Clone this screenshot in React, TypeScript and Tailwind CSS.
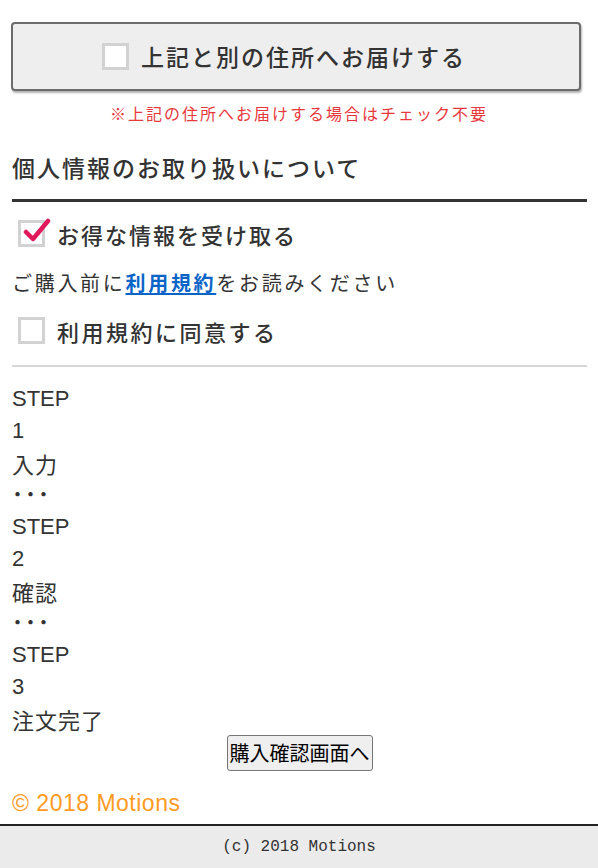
import React from "react";

const jp = { fontFamily: '"Noto Sans CJK JP", "Noto Sans", sans-serif' };

function Box({ checked }: { checked?: boolean }) {
  return (
    <span className="relative inline-block w-[27px] h-[27px] border-[3px] border-[#d2d2d2] bg-white shrink-0">
      {checked && (
        <svg
          className="absolute left-[2px] top-[-6px]"
          width="28"
          height="28"
          viewBox="0 0 28 28"
        >
          <path
            d="M3 15 L10 22 L25 4"
            fill="none"
            stroke="#e0195b"
            strokeWidth="4.5"
            strokeLinecap="round"
            strokeLinejoin="round"
          />
        </svg>
      )}
    </span>
  );
}

export default function App() {
  const steps = [
    ["1", "入力"],
    ["2", "確認"],
    ["3", "注文完了"],
  ];
  return (
    <div className="w-[598px] min-h-[868px] bg-white flex flex-col text-[#333]" style={jp}>
      <div className="px-[11px] pt-[22px]">
        <div className="w-[570px] h-[69px] rounded-[4px] border-2 border-[#6b6b6b] bg-[#eeeeee] shadow-[1px_2px_2px_rgba(0,0,0,0.3)] flex items-center justify-center gap-[12px] pr-[24px]">
          <Box />
          <span className="text-[23px] font-medium leading-none text-[#333] tracking-[2px]">
            上記と別の住所へお届けする
          </span>
        </div>
      </div>
      <p className="text-center text-[16px] leading-none text-[#e8383d] mt-[14px] tracking-[2px]">
        ※上記の住所へお届けする場合はチェック不要
      </p>
      <div className="px-[12px] w-[599px]">
        <h2 className="mt-[35px] text-[23px] font-medium leading-none tracking-[2px] pb-[20px] border-b-[3px] border-[#333]">
          個人情報のお取り扱いについて
        </h2>
        <div className="mt-[18px] flex items-center gap-[12px] pl-[6px]">
          <Box checked />
          <span className="text-[22px] font-medium leading-none tracking-[2px]">お得な情報を受け取る</span>
        </div>
        <p className="mt-[26px] text-[20px] leading-none tracking-[2.7px]">
          ご購入前に
          <a className="text-[#0b65c7] font-bold underline underline-offset-2">利用規約</a>
          をお読みください
        </p>
        <div className="mt-[24px] flex items-center gap-[12px] pl-[6px]">
          <Box />
          <span className="text-[22px] font-medium leading-none tracking-[2.5px]">利用規約に同意する</span>
        </div>
        <div className="mt-[21px] border-t-2 border-[#d6d6d6]" />
        <div className="mt-[16px] text-[22px]" style={{ fontFamily: '"Liberation Sans", "Noto Sans CJK JP", sans-serif' }}>
          {steps.map(([n, label], i) => (
            <React.Fragment key={n}>
              <div className="h-[32px] leading-[32px]">STEP</div>
              <div className="h-[32px] leading-[32px]">{n}</div>
              <div style={jp} className="h-[32px] leading-[32px] tracking-[1px]">{label}</div>
              {i < 2 && <div className="h-[32px] leading-[32px] font-bold tracking-[2px]">･･･</div>}
            </React.Fragment>
          ))}
        </div>
        <div className="flex justify-center">
          <button className="h-[36px] px-[2px] rounded-[3px] border border-[#767676] bg-[#efefef] text-[20px] leading-none text-black">
            購入確認画面へ
          </button>
        </div>
        <p className="mt-[21px] text-[23px] leading-none text-[#ff9c1f] tracking-[0.5px]" style={{ fontFamily: '"Liberation Sans", sans-serif' }}>
          © 2018 Motions
        </p>
      </div>
      <div className="mt-auto h-[44px] border-t-2 border-[#222] bg-[#ebebeb] flex items-center justify-center text-[16px] text-[#333]" style={{ fontFamily: '"Liberation Mono", monospace' }}>
        (c) 2018 Motions
      </div>
    </div>
  );
}
